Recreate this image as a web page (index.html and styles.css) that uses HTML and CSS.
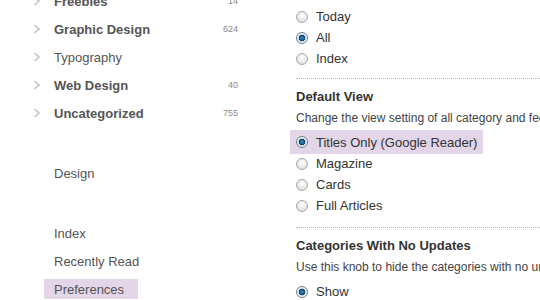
FILE: index.html
```html
<!DOCTYPE html>
<html>
<head>
<meta charset="utf-8">
<link rel="stylesheet" href="styles.css">
</head>
<body>
<div class="layout">
  <aside class="sidebar">
    <ul class="cats">
      <li class="cat bold"><svg class="chev" viewBox="0 0 8 10"><polyline points="1.5,1 6,5 1.5,9"/></svg><span class="name">Freebies</span><span class="count">14</span></li>
      <li class="cat bold"><svg class="chev" viewBox="0 0 8 10"><polyline points="1.5,1 6,5 1.5,9"/></svg><span class="name">Graphic Design</span><span class="count">624</span></li>
      <li class="cat"><svg class="chev" viewBox="0 0 8 10"><polyline points="1.5,1 6,5 1.5,9"/></svg><span class="name">Typography</span><span class="count"></span></li>
      <li class="cat bold"><svg class="chev" viewBox="0 0 8 10"><polyline points="1.5,1 6,5 1.5,9"/></svg><span class="name">Web Design</span><span class="count">40</span></li>
      <li class="cat bold"><svg class="chev" viewBox="0 0 8 10"><polyline points="1.5,1 6,5 1.5,9"/></svg><span class="name">Uncategorized</span><span class="count">755</span></li>
    </ul>
    <ul class="links first">
      <li class="link">Design</li>
    </ul>
    <ul class="links">
      <li class="link">Index</li>
      <li class="link">Recently Read</li>
      <li class="link active">Preferences</li>
    </ul>
  </aside>
  <main class="main">
    <div class="opts">
      <div class="opt"><span class="radio"></span>Today</div>
      <div class="opt"><span class="radio on"></span>All</div>
      <div class="opt"><span class="radio"></span>Index</div>
    </div>
    <hr class="sep">
    <h3 class="head">Default View</h3>
    <p class="desc">Change the view setting of all category and feed pages at once.</p>
    <div class="opts">
      <div class="opt sel"><span class="radio on"></span>Titles Only (Google Reader)</div>
      <div class="opt"><span class="radio"></span>Magazine</div>
      <div class="opt"><span class="radio"></span>Cards</div>
      <div class="opt"><span class="radio"></span>Full Articles</div>
    </div>
    <hr class="sep sep2">
    <h3 class="head">Categories With No Updates</h3>
    <p class="desc">Use this knob to hide the categories with no unread articles.</p>
    <div class="opts last">
      <div class="opt"><span class="radio on"></span>Show</div>
    </div>
  </main>
</div>
</body>
</html>
```

FILE: styles.css
```css
* { box-sizing: border-box; }
html, body { margin: 0; padding: 0; background: #fff; }
body {
  width: 540px;
  height: 300px;
  overflow: hidden;
  font-family: "Liberation Sans", Arial, sans-serif;
  font-size: 13px;
  color: #333;
}
.layout {
  display: flex;
  align-items: flex-start;
}
.sidebar {
  width: 270px;
  flex: none;
  margin-top: -13px;
}
ul { list-style: none; margin: 0; padding: 0; }
.cat {
  display: flex;
  align-items: center;
  height: 28px;
  padding-left: 33px;
  width: 240px;
  color: #555;
}
.chev {
  width: 8px;
  height: 10px;
  flex: none;
  fill: none;
  stroke: #c4c4c4;
  stroke-width: 1.6;
}
.name {
  margin-left: 13px;
  flex: 1;
}
.cat.bold .name { font-weight: bold; }
.count {
  font-size: 9px;
  color: #8a8a8a;
  text-align: right;
  padding-right: 2px;
}
.links { margin-top: 32px; }
.links.first { margin-top: 33px; }
.link {
  height: 28px;
  line-height: 28px;
  padding-left: 54px;
  color: #555;
}
.link.active {
  margin: 3px 0 0 44px;
  padding-left: 10px;
  width: 94px;
  height: 20px;
  line-height: 21px;
  background: #e2d6e8;
}
.main {
  flex: 1;
  padding-top: 6px;
  padding-left: 26px;
}
.opt {
  display: flex;
  align-items: center;
  height: 21px;
  white-space: nowrap;
}
.radio {
  width: 12px;
  height: 12px;
  border-radius: 50%;
  flex: none;
  margin-right: 8px;
  border: 1px solid #a7a7a7;
  background: radial-gradient(circle at 50% 35%, #fcfcfc 0%, #ececec 50%, #d6d6d6 100%);
}
.radio.on {
  border-color: #6f7f8c;
  background: radial-gradient(circle at 50% 50%, #3e8fd0 0, #14578c 2.2px, #113d63 3.2px, #dfe4e8 3.6px, #f6f6f6 4.5px, #c9cdd0 100%);
}
.opt.sel {
  height: 24px;
  width: 193px;
  margin: -1px 0 -1px -6px;
  padding-left: 6px;
  background: #e2d6e8;
}
.sep {
  margin: 9px 0 0 0;
  border: 0;
  border-top: 1px dotted #b5b5b5;
  height: 0;
}
.sep2 { margin-top: 11px; }
.head {
  margin: 9px 0 0 0;
  font-size: 13px;
  line-height: 18px;
  font-weight: bold;
  color: #333;
}
.desc {
  margin: 4px 0 5px 0;
  font-size: 12px;
  line-height: 16px;
  color: #444;
  white-space: nowrap;
}
.opts.last { margin-top: 6px; }
```
